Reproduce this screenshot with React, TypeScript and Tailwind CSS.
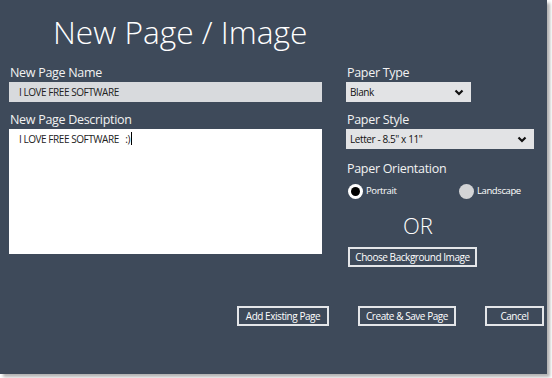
import React from "react"

const font = { fontFamily: '"Open Sans", "Noto Sans", sans-serif' }

function Chevron() {
  return (
    <svg width="10" height="7" viewBox="0 0 10 7" className="shrink-0">
      <polyline points="1.5,1.5 5,5 8.5,1.5" fill="none" stroke="#111" strokeWidth="2.2" />
    </svg>
  )
}

function Select({ value, width }: { value: string; width: string }) {
  return (
    <div className={`${width} h-[20px] bg-[#e2e3e5] flex items-center justify-between pl-[4px] pr-[7px]`}>
      <span className="text-[10px] tracking-[-0.4px] text-[#111]">{value}</span>
      <Chevron />
    </div>
  )
}

function Button({ label, className = "" }: { label: string; className?: string }) {
  return (
    <button
      className={`h-[20px] border-2 border-[#e4e6e9] text-white text-[10px] tracking-[-0.45px] leading-none whitespace-nowrap flex items-center justify-center ${className}`}
    >
      {label}
    </button>
  )
}

const label = "h-[17px] text-[12.5px] leading-[15px] tracking-[-0.3px] text-[#f2f2f2] pl-[1px]"

export default function App() {
  return (
    <div className="w-[552px] h-[378px] bg-white overflow-hidden" style={font}>
      <div className="w-[547px] h-[374px] bg-[#3e4a5a] shadow-[3px_3px_3px_rgba(0,0,0,0.3)] flex flex-col">
        <h1 className="pl-[53px] pt-[14px] text-[31.7px] leading-[36px] font-light text-white h-[65px]">
          New Page / Image
        </h1>

        <div className="flex gap-[24px] pl-[9px]">
          {/* Left column */}
          <div className="w-[313px] flex flex-col">
            <label className={label}>New Page Name</label>
            <div className="h-[20px] bg-[#d8dadd] flex items-center pl-[10px] text-[10px] tracking-[-0.45px] text-[#222]">
              I LOVE FREE SOFTWARE
            </div>
            <label className={`mt-[10px] ${label}`}>New Page Description</label>
            <div className="h-[125px] bg-white pl-[10px] pt-[3px] text-[10px] tracking-[-0.45px] text-[#222] flex items-start">
              <span className="whitespace-pre">I LOVE FREE SOFTWARE   :)</span>
              <span className="inline-block w-[1px] h-[13px] bg-black ml-[1px]" />
            </div>
          </div>

          {/* Right column */}
          <div className="w-[188px] flex flex-col">
            <label className={label}>Paper Type</label>
            <Select value="Blank" width="w-[125px]" />
            <label className={`mt-[10px] ${label}`}>Paper Style</label>
            <Select value={'Letter - 8.5" x 11"'} width="w-[188px]" />
            <div className={`mt-[12px] !h-[22px] ${label}`}>Paper Orientation</div>
            <div className="flex items-center h-[16px] pl-[2px]">
              <div className="flex items-center gap-[3px] w-[111px]">
                <span className="w-[15px] h-[15px] rounded-full bg-white flex items-center justify-center">
                  <span className="w-[9px] h-[9px] rounded-full bg-black" />
                </span>
                <span className="text-[9.5px] tracking-[-0.4px] text-white">Portrait</span>
              </div>
              <div className="flex items-center gap-[3px]">
                <span className="w-[15px] h-[15px] rounded-full bg-[#d3d4d6]" />
                <span className="text-[9.5px] tracking-[-0.4px] text-white">Landscape</span>
              </div>
            </div>
            <div className="mt-[14px] text-[22px] leading-[24px] font-light text-white pl-[57px]">OR</div>
            <div className="mt-[10px] pl-[2px]">
              <Button label="Choose Background Image" className="w-[129px]" />
            </div>
          </div>
        </div>

        <div className="mt-[39px] flex justify-end pr-[3px]">
          <Button label="Add Existing Page" className="w-[92px]" />
          <Button label="Create & Save Page" className="w-[98px] ml-[29px]" />
          <Button label="Cancel" className="w-[59px] ml-[29px]" />
        </div>
      </div>
    </div>
  )
}
